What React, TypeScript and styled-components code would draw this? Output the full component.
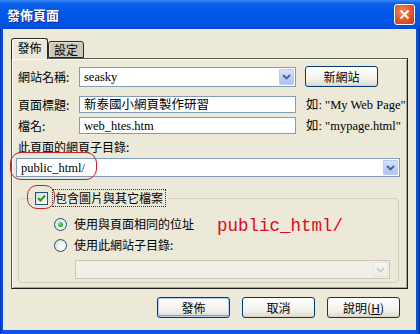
import * as React from "react";
import styled, { createGlobalStyle } from "styled-components";

const CJK = `"Noto Sans CJK TC", "Noto Sans CJK SC", sans-serif`;
const SERIF = `"Liberation Serif", "Noto Sans CJK TC", serif`;

const GlobalStyle = createGlobalStyle`
  html, body { margin: 0; padding: 0; background: #ECE9D8; }
  body { font-family: ${CJK}; font-size: 12px; color: #000; }
  * { box-sizing: border-box; }
`;

const Window = styled.div`
  position: relative;
  width: 420px;
  height: 334px;
  display: flex;
  flex-direction: column;
  background: #0054E3;
  overflow: hidden;
`;

const TitleBar = styled.div`
  flex: none;
  height: 29px;
  display: flex;
  align-items: center;
  padding: 0 5px 0 7px;
  background: linear-gradient(180deg, #3b8cf4 0%, #0a5ee8 12%, #0157e8 50%, #0253e4 85%, #0048d2 100%);
`;

const Title = styled.span`
  color: #fff;
  font-family: ${CJK};
  font-weight: bold;
  font-size: 13px;
  line-height: 16px;
  text-shadow: 1px 1px 0 #0b2a8a;
`;

const CloseButton = styled.div`
  margin-left: auto;
  width: 21px;
  height: 21px;
  border: 1px solid #fff;
  border-radius: 3px;
  background: radial-gradient(circle at 40% 35%, #f08a66 0%, #e0552d 55%, #c23a12 100%);
  display: flex;
  align-items: center;
  justify-content: center;
`;

const Frame = styled.div`
  flex: 1;
  display: flex;
  padding: 0 4px 4px 3px;
  background: linear-gradient(90deg, #0831b5 0px, #0a55e6 3px, #0a55e6 calc(100% - 4px), #0a4fd8 calc(100% - 2px), #00229c 100%);
`;

const Body = styled.div`
  flex: 1;
  display: flex;
  flex-direction: column;
  background: #ECE9D8;
  padding: 9px 8px 12px 8px;
`;

const TabStrip = styled.div`
  position: relative;
  z-index: 1;
  height: 20px;
  display: flex;
  align-items: flex-end;
`;

const Tab = styled.div<{ $active?: boolean }>`
  width: ${(p) => (p.$active ? 37 : 36)}px;
  height: ${(p) => (p.$active ? 21 : 17)}px;
  margin-bottom: ${(p) => (p.$active ? -1 : 0)}px;
  border: 1px solid #2a2a2a;
  border-bottom: ${(p) => (p.$active ? "none" : "1px solid #2a2a2a")};
  border-radius: 3px 3px 0 0;
  background: ${(p) => (p.$active ? "#ECE9D8" : "#cbc9bd")};
  box-shadow: ${(p) => (p.$active ? "inset 1px 1px 0 #fff" : "inset 1px 1px 0 #e6e4da")};
  display: flex;
  align-items: ${(p) => (p.$active ? "flex-start" : "center")};
  padding-top: ${(p) => (p.$active ? 2 : 0)}px;
  justify-content: center;
  font-size: 12px;
  line-height: 14px;
`;

const Panel = styled.div`
  height: 231px;
  border: 1px solid #555;
  border-right-color: #1e1e1e;
  border-bottom-color: #1e1e1e;
  box-shadow: inset 1px 1px 0 #fff, inset -1px -1px 0 #a8a698;
  padding: 7px 0 0 6px;
  display: flex;
  flex-direction: column;
`;

const Row = styled.div<{ $mt: number; $h: number; $ml?: number }>`
  display: flex;
  align-items: center;
  margin-top: ${(p) => p.$mt}px;
  margin-left: ${(p) => p.$ml ?? 0}px;
  height: ${(p) => p.$h}px;
`;

const Label = styled.span<{ $w?: number }>`
  flex: none;
  width: ${(p) => (p.$w ? `${p.$w}px` : "auto")};
  font-size: 12px;
  line-height: 14px;
  white-space: nowrap;
`;

const TextInput = styled.div<{ $w: number }>`
  width: ${(p) => p.$w}px;
  height: 100%;
  border: 1px solid #7f9db9;
  background: #fff;
  padding-left: 4px;
  display: flex;
  align-items: center;
  font-family: ${SERIF};
  font-size: 12.5px;
  line-height: 14px;
  white-space: nowrap;
`;

const Combo = styled.div<{ $w: number; $disabled?: boolean }>`
  width: ${(p) => p.$w}px;
  height: 100%;
  border: 1px solid ${(p) => (p.$disabled ? "#c9c7ba" : "#7f9db9")};
  background: ${(p) => (p.$disabled ? "#f0efe8" : "#fff")};
  display: flex;
  align-items: stretch;
  padding: 1px;
`;

const ComboText = styled.span`
  flex: 1;
  display: flex;
  align-items: center;
  padding-left: 3px;
  font-family: ${SERIF};
  font-size: 12.5px;
  line-height: 14px;
`;

const ArrowButton = styled.span<{ $disabled?: boolean }>`
  width: 15px;
  flex: none;
  border: 1px solid ${(p) => (p.$disabled ? "#e4e3dc" : "#b9cdf6")};
  border-radius: 1px;
  background: ${(p) =>
    p.$disabled
      ? "linear-gradient(180deg, #f7f7f3, #eeede7)"
      : "linear-gradient(180deg, #d6e2fd 0%, #bccffb 55%, #adc3f6 100%)"};
  display: flex;
  align-items: center;
  justify-content: center;
`;

const Hint = styled.span`
  margin-left: 10px;
  font-family: ${SERIF};
  font-size: 12.5px;
  line-height: 14px;
  white-space: nowrap;
`;

const Button = styled.div<{ $default?: boolean; $ml?: number }>`
  flex: none;
  width: 73px;
  height: 21px;
  margin-left: ${(p) => p.$ml ?? 0}px;
  border: 1px solid #003c74;
  border-radius: 3px;
  background: linear-gradient(180deg, #ffffff 0%, #f4f3ee 60%, #e3e0d5 90%, #d6d0c5 100%);
  box-shadow: ${(p) => (p.$default ? "inset 0 0 0 1px #b9d1f8, inset 0 -1px 0 1px #7f9be6" : "none")};
  display: flex;
  align-items: center;
  justify-content: center;
  font-size: 12px;
  line-height: 14px;
`;

const GroupBox = styled.fieldset`
  margin: 12px 0 0 0;
  width: 381px;
  padding: 0 0 3px 0;
  border: 1px solid #d0d0bf;
  border-radius: 4px;
  display: flex;
  flex-direction: column;
  min-inline-size: 0;
`;

const Legend = styled.legend`
  margin-left: 14px;
  padding: 0 2px;
  height: 18px;
  display: flex;
  align-items: center;
`;

const CheckBox = styled.span`
  width: 13px;
  height: 13px;
  flex: none;
  border: 1px solid #1c5180;
  background: linear-gradient(135deg, #dcdcd6 0%, #f2f2ef 60%, #fff 100%);
  display: flex;
  align-items: center;
  justify-content: center;
`;

const FocusText = styled.span`
  margin-left: 4px;
  padding: 1px 2px;
  border: 1px dotted #333;
  font-size: 12px;
  line-height: 14px;
`;

const Radio = styled.span<{ $on?: boolean }>`
  width: 13px;
  height: 13px;
  flex: none;
  border-radius: 50%;
  border: 1px solid #1c5180;
  background: radial-gradient(circle at 65% 65%, #fff 0%, #f0f0ec 45%, #d2d2cb 100%);
  display: flex;
  align-items: center;
  justify-content: center;
  &::after {
    content: "";
    display: ${(p) => (p.$on ? "block" : "none")};
    width: 5px;
    height: 5px;
    border-radius: 50%;
    background: radial-gradient(circle at 35% 35%, #7ee57a 0%, #2fae2b 60%, #1a8a17 100%);
  }
`;

const RadioText = styled.span`
  margin-left: 7px;
  font-size: 12px;
  line-height: 14px;
  white-space: nowrap;
`;

const Annotation = styled.span`
  margin-left: 23px;
  margin-top: 4px;
  font-family: "Liberation Mono", monospace;
  font-size: 17.5px;
  line-height: 14px;
  color: #de0a1e;
  white-space: nowrap;
`;

const ButtonRow = styled.div`
  display: flex;
  justify-content: flex-end;
  margin-top: 8px;
  padding-right: 8px;
`;

const Oval = styled.div<{ $x: number; $y: number; $w: number; $h: number; $r: number }>`
  position: absolute;
  left: ${(p) => p.$x}px;
  top: ${(p) => p.$y}px;
  width: ${(p) => p.$w}px;
  height: ${(p) => p.$h}px;
  border: 1px solid #c0242c;
  border-radius: ${(p) => p.$r}px;
  pointer-events: none;
`;

const Chevron = ({ disabled }: { disabled?: boolean }) => (
  <svg width="9" height="6" viewBox="0 0 9 6">
    <path
      d="M1 1 L4.5 4.5 L8 1"
      fill="none"
      stroke={disabled ? "#c9cbd6" : "#4d6185"}
      strokeWidth="1.8"
    />
  </svg>
);

const App: React.FunctionComponent = () => {
  return (
    <>
      <GlobalStyle />
      <Window>
        <TitleBar>
          <Title>發佈頁面</Title>
          <CloseButton>
            <svg width="11" height="11" viewBox="0 0 11 11">
              <path d="M1.5 1.5 L9.5 9.5 M9.5 1.5 L1.5 9.5" stroke="#fff" strokeWidth="2" />
            </svg>
          </CloseButton>
        </TitleBar>
        <Frame>
          <Body>
            <TabStrip>
              <Tab $active>發佈</Tab>
              <Tab>設定</Tab>
            </TabStrip>
            <Panel>
              <Row $mt={0} $h={21}>
                <Label $w={61}>網站名稱:</Label>
                <Row $mt={0} $h={20}>
                  <Combo $w={217}>
                    <ComboText>seasky</ComboText>
                    <ArrowButton>
                      <Chevron />
                    </ArrowButton>
                  </Combo>
                </Row>
                <Button $ml={9}>新網站</Button>
              </Row>
              <Row $mt={9} $h={17}>
                <Label $w={61}>頁面標題:</Label>
                <TextInput $w={217}>新泰國小網頁製作研習</TextInput>
                <Hint>如: "My Web Page"</Hint>
              </Row>
              <Row $mt={4} $h={17}>
                <Label $w={61}>檔名:</Label>
                <TextInput $w={217}>web_htes.htm</TextInput>
                <Hint>如: "mypage.html"</Hint>
              </Row>
              <Row $mt={6} $h={14}>
                <Label>此頁面的網頁子目錄:</Label>
              </Row>
              <Row $mt={4} $h={19} $ml={-2}>
                <Combo $w={384}>
                  <ComboText>public_html/</ComboText>
                  <ArrowButton>
                    <Chevron />
                  </ArrowButton>
                </Combo>
              </Row>
              <GroupBox>
                <Legend>
                  <CheckBox>
                    <svg width="9" height="9" viewBox="0 0 9 9">
                      <path d="M1 4 L3.5 6.5 L8 1.5" fill="none" stroke="#21a121" strokeWidth="2" />
                    </svg>
                  </CheckBox>
                  <FocusText>包含圖片與其它檔案</FocusText>
                </Legend>
                <Row $mt={10} $h={14} $ml={35}>
                  <Radio $on />
                  <RadioText>使用與頁面相同的位址</RadioText>
                  <Annotation>public_html/</Annotation>
                </Row>
                <Row $mt={7} $h={14} $ml={35}>
                  <Radio />
                  <RadioText>使用此網站子目錄:</RadioText>
                </Row>
                <Row $mt={8} $h={19} $ml={56}>
                  <Combo $w={315} $disabled>
                    <ComboText />
                    <ArrowButton $disabled>
                      <Chevron disabled />
                    </ArrowButton>
                  </Combo>
                </Row>
              </GroupBox>
            </Panel>
            <ButtonRow>
              <Button $default>發佈</Button>
              <Button $ml={12}>取消</Button>
              <Button $ml={12}>
                說明(<u>H</u>)
              </Button>
            </ButtonRow>
          </Body>
        </Frame>
        <Oval $x={10} $y={152} $w={87} $h={28} $r={11} />
        <Oval $x={27} $y={185} $w={28} $h={24} $r={10} />
      </Window>
    </>
  );
};

export default App;
